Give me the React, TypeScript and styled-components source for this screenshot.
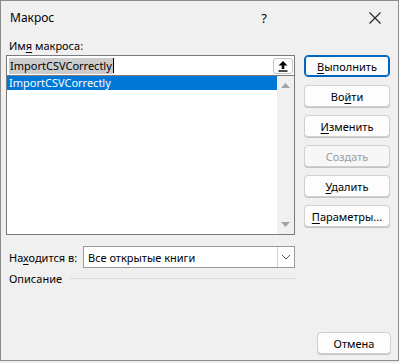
import React from "react";
import styled, { createGlobalStyle } from "styled-components";

const Global = createGlobalStyle`
  html, body { margin: 0; padding: 0; background: #f0f0f0; }
  body { font-family: "Noto Sans", "Segoe UI", sans-serif; font-size: 11px; color: #000; }
  * { box-sizing: border-box; }
`;

const Window = styled.div`
  width: 399px;
  height: 361px;
  border: 1px solid #8c8c8c;
  background: #f0f0f0;
  display: flex;
  flex-direction: column;
`;

const TitleBar = styled.div`
  height: 33px;
  display: flex;
  align-items: center;
  padding-left: 9px;
`;

const Title = styled.div`
  flex: 1;
  font-size: 12px;
`;

const Help = styled.div`
  width: 16px;
  text-align: center;
  font-size: 13px;
  margin-right: 96px;
`;

const CloseBox = styled.div`
  width: 14px;
  height: 14px;
  margin-right: 16px;
  display: flex;
`;

const Content = styled.div`
  flex: 1;
  display: flex;
  gap: 9px;
  padding-left: 5px;
  white-space: nowrap;
`;

const LeftCol = styled.div`
  width: 289px;
  display: flex;
  flex-direction: column;
`;

const FieldLabel = styled.div`
  height: 16px;
  line-height: 16px;
  margin: 4px 0 1px 3px;
`;

const U = styled.span`
  text-decoration: underline;
  text-underline-offset: 2px;
`;

const NameBox = styled.div`
  height: 20px;
  border: 1px solid #7a7a7a;
  border-bottom: none;
  background: #fff;
  display: flex;
  align-items: center;
  padding: 0 1px 0 2px;
`;

const NameText = styled.div`
  flex: 1;
  display: flex;
  align-items: center;
`;

const Selected = styled.span`
  background: #cccccc;
  padding: 0 1px 0 1px;
  line-height: 16px;
  height: 16px;
`;

const Caret = styled.span`
  width: 1px;
  height: 15px;
  background: #000;
`;

const IconButton = styled.div`
  width: 20px;
  height: 16px;
  border: 1px solid #c4c4c4;
  border-radius: 3px;
  background: #fdfdfd;
  display: flex;
  align-items: center;
  justify-content: center;
`;

const List = styled.div`
  height: 160px;
  border: 1px solid #7a7a7a;
  background: #fff;
  display: flex;
`;

const Items = styled.div`
  flex: 1;
`;

const Item = styled.div<{ $active?: boolean }>`
  height: 14px;
  line-height: 14px;
  padding-left: 2px;
  background: ${(p) => (p.$active ? "#0078d7" : "transparent")};
  color: ${(p) => (p.$active ? "#fff" : "#000")};
`;

const ScrollBar = styled.div`
  width: 17px;
  background: #f0f0f0;
  display: flex;
  flex-direction: column;
  justify-content: space-between;
  align-items: center;
  padding: 7px 0 7px;
`;

const LocationRow = styled.div`
  margin-top: 11px;
  display: flex;
  align-items: center;
  height: 22px;
`;

const LocationLabel = styled.div`
  width: 77px;
  padding-left: 3px;
`;

const Select = styled.div`
  flex: 1;
  height: 22px;
  border: 1px solid #9a9a9a;
  background: #fff;
  display: flex;
  align-items: center;
`;

const SelectText = styled.div`
  flex: 1;
  padding-left: 4px;
`;

const SelectArrow = styled.div`
  width: 17px;
  height: 100%;
  border-left: 1px solid #cfcfcf;
  display: flex;
  align-items: center;
  justify-content: center;
`;

const DescRow = styled.div`
  margin-top: 2px;
  display: flex;
  align-items: center;
  height: 16px;
  padding-left: 3px;
  gap: 8px;
`;

const Rule = styled.div`
  flex: 1;
  height: 1px;
  background: #d9d9d9;
`;

const RightCol = styled.div`
  width: 86px;
  padding-top: 21px;
  display: flex;
  flex-direction: column;
  gap: 8px;
`;

const Button = styled.div<{ $default?: boolean; $disabled?: boolean; $w?: number }>`
  width: ${(p) => (p.$w ? `${p.$w}px` : "100%")};
  height: 22px;
  border-radius: 4px;
  border: ${(p) => (p.$default ? "1px solid #0067c0" : "1px solid #d0d0d0")};
  box-shadow: ${(p) => (p.$default ? "inset 0 0 0 1px #0067c0" : "0 1px 0 #c4c4c4")};
  background: ${(p) => (p.$disabled ? "#f7f7f7" : "#fdfdfd")};
  color: ${(p) => (p.$disabled ? "#9d9d9d" : "#000")};
  display: flex;
  align-items: center;
  justify-content: center;
`;

const Footer = styled.div`
  display: flex;
  justify-content: flex-end;
  padding: 0 7px 6px 0;
`;

export default function App() {
  return (
    <>
      <Global />
      <Window>
        <TitleBar>
          <Title>Макрос</Title>
          <Help>?</Help>
          <CloseBox>
            <svg width="14" height="14" viewBox="0 0 14 14">
              <path d="M1.5 1.5 L12.5 12.5 M12.5 1.5 L1.5 12.5" stroke="#222" strokeWidth="1.1" fill="none" />
            </svg>
          </CloseBox>
        </TitleBar>
        <Content>
          <LeftCol>
            <FieldLabel>
              Им<U>я</U> макроса:
            </FieldLabel>
            <NameBox>
              <NameText>
                <Selected>ImportCSVCorrectly</Selected>
                <Caret />
              </NameText>
              <IconButton>
                <svg width="12" height="12" viewBox="0 0 12 12">
                  <path d="M6 1 L10.5 5.5 L7.3 5.5 L7.3 9 L4.7 9 L4.7 5.5 L1.5 5.5 Z" fill="#000" />
                  <rect x="1.5" y="10.3" width="9" height="1.4" fill="#000" />
                </svg>
              </IconButton>
            </NameBox>
            <List>
              <Items>
                <Item $active>ImportCSVCorrectly</Item>
              </Items>
              <ScrollBar>
                <svg width="9" height="5" viewBox="0 0 9 5">
                  <path d="M4.5 0 L9 5 L0 5 Z" fill="#a3a3a3" />
                </svg>
                <svg width="9" height="5" viewBox="0 0 9 5">
                  <path d="M0 0 L9 0 L4.5 5 Z" fill="#a3a3a3" />
                </svg>
              </ScrollBar>
            </List>
            <LocationRow>
              <LocationLabel>
                На<U>х</U>одится в:
              </LocationLabel>
              <Select>
                <SelectText>Все открытые книги</SelectText>
                <SelectArrow>
                  <svg width="10" height="6" viewBox="0 0 10 6">
                    <path d="M1 1 L5 5 L9 1" stroke="#555" strokeWidth="1" fill="none" />
                  </svg>
                </SelectArrow>
              </Select>
            </LocationRow>
            <DescRow>
              <span>Описание</span>
              <Rule />
            </DescRow>
          </LeftCol>
          <RightCol>
            <Button $default>
              <span><U>В</U>ыполнить</span>
            </Button>
            <Button>
              <span>Во<U>й</U>ти</span>
            </Button>
            <Button>
              <span><U>И</U>зменить</span>
            </Button>
            <Button $disabled>
              <span>Создать</span>
            </Button>
            <Button>
              <span><U>У</U>далить</span>
            </Button>
            <Button>
              <span><U>П</U>араметры...</span>
            </Button>
          </RightCol>
        </Content>
        <Footer>
          <Button $w={74}>Отмена</Button>
        </Footer>
      </Window>
    </>
  );
}
